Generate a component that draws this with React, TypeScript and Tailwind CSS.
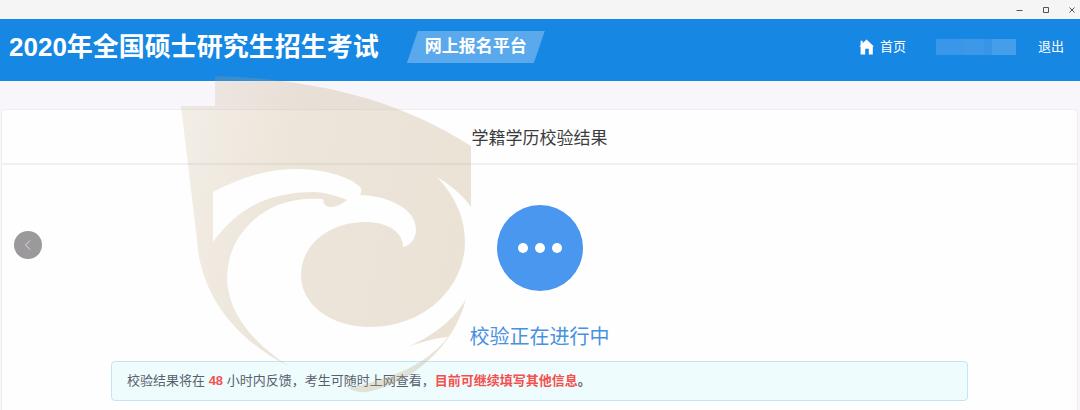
const font = "font-['Liberation_Sans','Noto_Sans_CJK_SC',sans-serif]";

const HomeIcon = () => (
  <svg viewBox="0 0 15 16" className="h-4 w-[15px]" fill="currentColor" aria-hidden="true">
    <path d="M7.5 0.5 L15 7.6 H13.8 V15.5 H9.8 V9.8 H6.2 V15.5 H1.6 V7.6 H0.2 L1.6 6.2 V1.8 H3.6 V4.2 Z" />
  </svg>
);

// eagle head inside a shield, drawn over the page
const Watermark = () => (
  <svg
    viewBox="180 75 294 320"
    className="pointer-events-none absolute left-[180px] top-[75px] h-[320px] w-[294px]"
    aria-hidden="true"
  >
    <defs>
      <linearGradient id="shield" gradientUnits="userSpaceOnUse" x1="181" y1="100" x2="471" y2="160">
        <stop offset="0" stopColor="#bfa57c" stopOpacity="0.18" />
        <stop offset="0.4" stopColor="#bfa57c" stopOpacity="0.28" />
        <stop offset="1" stopColor="#bfa57c" stopOpacity="0.31" />
      </linearGradient>
    </defs>
    <path
      fill="url(#shield)"
      d="M215 76 C310 79 395 97 471 146 V207 C462 194 450 185 437 177 C456 197 465 219 465 242 C465 286 426 327 370 327 C331 327 301 305 301 275 C301 246 328 222 365 222 C388 222 403 232 403 247 C412 245 416 237 416 229 C416 211 392 196 360 195 C362 191 362 188 359 186 C346 175 321 169 295 169 C268 169 242 177 213 192 V242 C236 211 264 192 315 192 C328 193 337 196 347 200 C340 205 336 207 331 207 C326 207 323 204 323 199 C282 196 255 212 237 240 C217 277 224 324 290 367 C230 337 200 290 197 240 L181 106 H215 Z"
    />
    <path
      fill="url(#shield)"
      d="M466 299 C456 317 434 337 402 349 C420 342 436 338 448 337 C429 361 400 377 348 388 C353 391 360 393 367 392 C413 383 454 346 466 299 Z"
    />
  </svg>
);

const WindowBar = () => (
  <div className="flex h-[19px] items-center justify-end gap-[18px] bg-[#f5f5f5] pr-1 text-[#555]">
    <button aria-label="Minimize">
      <svg viewBox="0 0 8 8" className="h-2 w-2" stroke="currentColor"><path d="M0.5 4.5h6" /></svg>
    </button>
    <button aria-label="Maximize">
      <svg viewBox="0 0 8 8" className="h-2 w-2" stroke="currentColor" fill="none"><path d="M1.5 1.5h5v5h-5z" /></svg>
    </button>
    <button aria-label="Close">
      <svg viewBox="0 0 8 8" className="h-2 w-2" stroke="currentColor"><path d="M1.5 1.5l5 5M6.5 1.5l-5 5" /></svg>
    </button>
  </div>
);

const Header = () => (
  <header className="flex items-center bg-[#1687e3] pb-[18px] pl-[9px] pr-4 pt-3 text-white">
    <h1 className="text-[26px] font-bold leading-[30px]">2020年全国硕士研究生招生考试</h1>
    <div className="ml-7 bg-[#5aa9ec] px-[18px] text-[17px] font-bold leading-8 [clip-path:polygon(8%_0,100%_0,92%_100%,0_100%)]">
      网上报名平台
    </div>
    <nav className="ml-auto flex items-center text-[13px] leading-5">
      <a href="#home" className="flex items-center gap-[6px]">
        <HomeIcon />
        首页
      </a>
      <div className="ml-[30px] flex h-4 w-20">
        <div className="w-7 bg-[#3a96e8]" />
        <div className="w-5 bg-[#3e98e8]" />
        <div className="w-2 bg-[#3794e7]" />
        <div className="w-6 bg-[#459eea]" />
      </div>
      <a href="#logout" className="ml-[22px]">退出</a>
    </nav>
  </header>
);

const App = () => {
  return (
    <div className={`relative flex min-h-screen flex-col bg-[#f8f6fa] ${font}`}>
      <WindowBar />
      <Header />
      <main className="relative ml-px mr-0.5 mt-7 flex-1 rounded-t border border-b-0 border-[#efedf0] bg-[#fefefe]">
        <h2 className="border-b-2 border-[#f1f0f1] pb-[10px] pt-[15px] text-center text-[17px] leading-7 text-[#3c3c3c]">
          学籍学历校验结果
        </h2>
        <button
          aria-label="返回"
          className="absolute left-3 top-[121px] flex h-7 w-7 items-center justify-center rounded-full bg-[#9b999b] text-[#dddddd]"
        >
          <svg viewBox="0 0 10 12" className="h-3 w-[10px]" fill="none" stroke="currentColor">
            <path d="M7 1.5 2.5 6 7 10.5" />
          </svg>
        </button>
        <div className="flex flex-col items-center pt-10">
          <div className="flex h-[86px] w-[86px] items-center justify-center gap-[7px] rounded-full bg-[#4997ef]">
            <span className="h-[10px] w-[10px] rounded-full bg-white" />
            <span className="h-[10px] w-[10px] rounded-full bg-white" />
            <span className="h-[10px] w-[10px] rounded-full bg-white" />
          </div>
          <p className="mt-8 text-xl leading-7 text-[#4a90e2]">校验正在进行中</p>
        </div>
        <p className="mx-[109px] mt-[10px] rounded border border-[#bfe6f2] bg-[#eefcfe] px-[15px] py-[9px] text-[13px] leading-5 text-[#59606c]">
          校验结果将在 <b className="text-[#f5504e]">48</b> 小时内反馈，考生可随时上网查看，<b className="text-[#f5504e]">目前可继续填写其他信息</b><b>。</b>
        </p>
      </main>
      <Watermark />
    </div>
  );
};

export default App;
